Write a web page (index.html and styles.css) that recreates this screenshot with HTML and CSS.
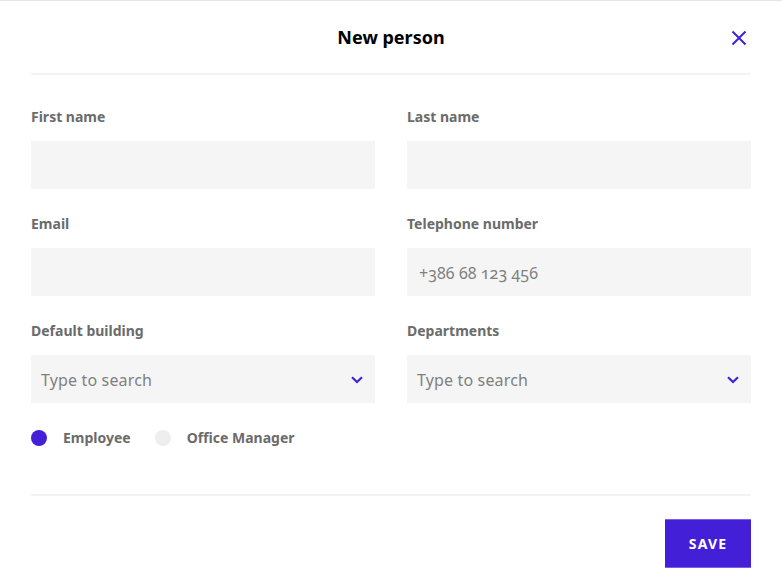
FILE: index.html
```html
<!DOCTYPE html>
<html lang="en">
<head>
<meta charset="utf-8">
<title>New person</title>
<link rel="stylesheet" href="styles.css">
</head>
<body>
<main class="modal">
  <header class="modal-header">
    <h1 class="modal-title">New person</h1>
    <button class="close" type="button" aria-label="Close">
      <svg width="16" height="16" viewBox="0 0 16 16"><path d="M1.5 1.5L14.500 14.500M14.500 1.500L1.500 14.500" fill="none" stroke="#431fd8" stroke-width="2"/></svg>
    </button>
  </header>
  <form class="form">
    <div class="field"><label class="label">First name</label><div class="input"></div></div>
    <div class="field"><label class="label">Last name</label><div class="input"></div></div>
    <div class="field"><label class="label">Email</label><div class="input"></div></div>
    <div class="field"><label class="label">Telephone number</label><div class="input phone">+386 68 123 456</div></div>
    <div class="field"><label class="label">Default building</label><div class="input select"><span>Type to search</span>
      <svg class="chevron" width="12" height="8" viewBox="0 0 12 8"><path d="M1 1.300L6 6L11 1.300" fill="none" stroke="#431fd8" stroke-width="2.200"/></svg></div></div>
    <div class="field"><label class="label">Departments</label><div class="input select"><span>Type to search</span>
      <svg class="chevron" width="12" height="8" viewBox="0 0 12 8"><path d="M1 1.300L6 6L11 1.300" fill="none" stroke="#431fd8" stroke-width="2.200"/></svg></div></div>
  </form>
  <div class="roles">
    <div class="role"><span class="dot on"></span><span class="role-name">Employee</span></div>
    <div class="role"><span class="dot"></span><span class="role-name">Office Manager</span></div>
  </div>
  <footer class="modal-footer"><button class="save" type="button">SAVE</button></footer>
</main>
</body>
</html>
```
FILE: styles.css
```css
* { box-sizing: border-box; }
html, body { margin: 0; height: 100%; background: #fff; }
body { font-family: "Noto Sans", "Open Sans", sans-serif; overflow: hidden; }
.modal { height: 583px; padding: 0 31px; border-top: 1px solid #e4e4e4; }
.modal-header { height: 74px; display: flex; align-items: center; justify-content: center; position: relative; border-bottom: 2px solid #f3f3f3; padding-bottom: 1px; }
.modal-title { margin: 0; font-size: 18px; font-weight: 700; color: #000; line-height: 24px; }
.close { position: absolute; right: 4px; top: 29px; width: 16px; height: 16px; padding: 0; border: 0; background: none; display: block; line-height: 0; }
.form { display: grid; grid-template-columns: 344px 344px; column-gap: 32px; row-gap: 25px; padding-top: 32px; }
.field { display: flex; flex-direction: column; gap: 14px; }
.label { font-size: 14px; font-weight: 700; line-height: 20px; color: #6b6b6b; height: 20px; }
.input { height: 48px; padding-top: 2px; background: #f5f5f5; font-size: 16px; line-height: 46px; letter-spacing: 0.15px; color: #808080; font-variant-numeric: oldstyle-nums; }
.phone { padding-left: 12px; letter-spacing: 0.07px; }
.select { display: flex; align-items: center; justify-content: space-between; padding: 2px 12px 0 10px; }
.chevron { margin-bottom: 1px; }
.roles { display: flex; gap: 24px; margin-top: 25px; height: 20px; }
.role { display: flex; align-items: center; gap: 16px; }
.dot { width: 16px; height: 16px; border-radius: 50%; background: #eee; }
.dot.on { background: #431fd8; }
.role-name { font-size: 14px; font-weight: 700; line-height: 20px; color: #6b6b6b; }
.modal-footer { margin-top: 46px; border-top: 2px solid #f3f3f3; padding-top: 23px; display: flex; justify-content: flex-end; }
.save { width: 86px; height: 49px; border: 0; border-top: 1px solid #7a60e4; border-bottom: 1px solid #7a60e4; background: #431fd8; color: #fff; font-family: inherit; font-size: 14px; font-weight: 700; letter-spacing: 1.120px; padding: 0; }
```
